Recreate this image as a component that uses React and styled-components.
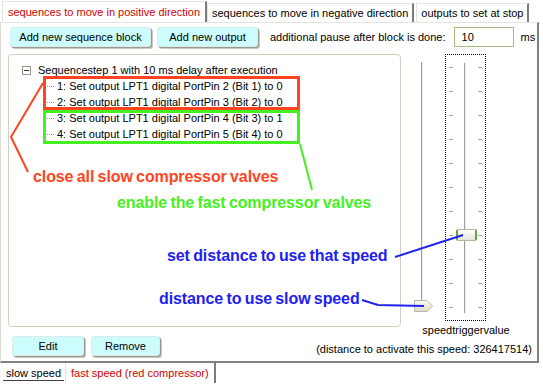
import React from 'react'
import styled, { createGlobalStyle } from 'styled-components'

const GlobalStyle = createGlobalStyle`
    body {
        margin: 0;
        background: #fff;
        font-family: "Liberation Sans", Arial, sans-serif;
        font-size: 11px;
        color: #000;
    }
`;

const Root = styled.div`
    position: relative;
    width: 543px;
    height: 386px;
    overflow: hidden;
    background: #fff;
`;

/* top tab strip */
const TabStrip = styled.div`
    display: flex;
    align-items: flex-end;
    height: 22px;
    padding-left: 2px;
`;

const Tab = styled.div`
    height: ${p => (p.active ? '21px' : '19px')};
    padding: 0 ${p => (p.active ? '5px' : '4px')};
    margin-right: ${p => (p.active ? '0' : '2px')};
    display: flex;
    align-items: center;
    white-space: nowrap;
    background: #fff;
    color: ${p => (p.active ? '#d00000' : '#000')};
    border-left: 1px solid #e4e4e4;
    border-top: 1px solid #e4e4e4;
    border-right: 2px solid #7c7c7c;
    box-sizing: border-box;
    padding-bottom: ${p => (p.active ? '1px' : '0')};
`;

/* the panel under the tabs */
const Panel = styled.div`
    width: 539px;
    height: 341px;
    box-sizing: border-box;
    border-left: 1px solid #dcdcd4;
    border-top: 1px solid #e4e4e4;
    border-right: 2px solid #808080;
    border-bottom: 2px solid #808080;
    padding: 4px 0 0 7px;
    display: flex;
    flex-direction: column;
`;

const Toolbar = styled.div`
    display: flex;
    align-items: center;
    height: 20px;
    padding-left: 2px;
`;

const Button = styled.button`
    width: ${p => p.w}px;
    height: 20px;
    margin-right: ${p => p.gap || 0}px;
    padding: 0;
    font-family: inherit;
    font-size: 11px;
    color: #000;
    background: #ccfcfc;
    border: 1px solid #d8ecec;
    border-radius: 3px;
    box-shadow: 1px 1px 0 #9a9a90, 2px 2px 0 #c8c8c0;
    box-sizing: border-box;
`;

const Label = styled.span`
    margin-left: ${p => p.ml || 0}px;
    white-space: nowrap;
`;

const NumberInput = styled.div`
    width: 60px;
    height: 20px;
    margin-left: 8px;
    box-sizing: border-box;
    border: 1px solid #a5bb82;
    padding: 0 0 0 7px;
    display: flex;
    align-items: center;
`;

const MainRow = styled.div`
    display: flex;
    margin-top: 7px;
    height: 281px;
`;

const TreeBox = styled.div`
    width: 393px;
    height: 273px;
    box-sizing: border-box;
    border: 1px solid #d0d0bf;
    border-radius: 4px;
    padding: 7px 0 0 13px;
`;

const TreeRow = styled.div`
    display: flex;
    align-items: center;
    height: 16px;
    padding-left: ${p => p.indent || 0}px;
    white-space: nowrap;
`;

const Expander = styled.span`
    width: 9px;
    height: 9px;
    box-sizing: border-box;
    border: 1px solid #9a9a8c;
    margin-right: 7px;
    display: flex;
    align-items: center;
    justify-content: center;
    background: #fff;
    &::after {
        content: '';
        width: 5px;
        height: 1px;
        background: #333;
    }
`;

const Connector = styled.span`
    width: 7px;
    border-top: 1px dotted #999;
    margin-right: 3px;
`;

const SliderColumn = styled.div`
    display: flex;
    flex-direction: column;
    align-items: center;
    margin-left: 9px;
    width: 100px;
`;

const Sliders = styled.div`
    display: flex;
    align-items: flex-start;
    width: 100%;
    padding-left: 1px;
`;

const LeftSlider = styled.div`
    position: relative;
    width: 22px;
    height: 264px;
    display: flex;
    justify-content: center;
    padding-top: 8px;
    box-sizing: border-box;
`;

const Track = styled.div`
    width: 2px;
    height: ${p => p.h}px;
    border-left: 1px solid #a09f98;
    border-right: 1px solid #f0efe6;
    box-sizing: border-box;
`;

const ArrowThumb = styled.svg`
    position: absolute;
    left: 2px;
    bottom: 5px;
`;

const FocusSlider = styled.div`
    position: relative;
    width: 41px;
    height: 267px;
    margin-left: 12px;
    box-sizing: border-box;
    border: 1px dotted #000;
    display: flex;
    justify-content: space-between;
    padding: 0 3px;
`;

const Ticks = styled.div`
    display: flex;
    flex-direction: column;
    justify-content: space-between;
    padding: 12px 0;
    height: 100%;
    box-sizing: border-box;
`;

const Tick = styled.div`
    width: 4px;
    height: 1px;
    background: #a8a8a0;
`;

const TrackWrap = styled.div`
    padding-top: 8px;
`;

const BarThumb = styled.div`
    position: absolute;
    left: 10px;
    top: 174px;
    width: 21px;
    height: 12px;
    box-sizing: border-box;
    background: linear-gradient(#ffffff, #e4e4d6);
    border: 1px solid #b4b4a4;
    border-left: 2px solid #5ca83e;
    border-right: 2px solid #5ca83e;
    border-radius: 2px;
`;

const SliderCaption = styled.div`
    margin-top: 3px;
    padding-left: 12px;
    white-space: nowrap;
`;

const Footer = styled.div`
    display: flex;
    align-items: flex-end;
    height: 21px;
    padding-left: 4px;
    padding-right: 5px;
`;

const Spacer = styled.div`
    flex: 1;
`;

const DistanceText = styled.span`
    white-space: nowrap;
    margin-bottom: 1px;
`;

/* bottom tabs */
const BottomStrip = styled.div`
    display: flex;
    align-items: flex-start;
    padding-left: 3px;
`;

const BottomTab = styled.div`
    height: ${p => (p.active ? '20px' : '18px')};
    padding: 0 ${p => (p.active ? '5px' : '3px')};
    display: flex;
    align-items: center;
    box-sizing: border-box;
    white-space: nowrap;
    color: ${p => (p.active ? '#d00000' : '#000')};
    border-bottom: ${p => (p.active ? 'none' : '1px solid #404040')};
    border-left: ${p => (p.active ? '1px solid #e4e4e4' : 'none')};
    border-right: ${p => (p.active ? '2px solid #7c7c7c' : 'none')};
    padding-top: ${p => (p.active ? '0' : '3px')};
    margin-right: 1px;
`;

/* annotation layer */
const Overlay = styled.svg`
    position: absolute;
    left: 0;
    top: 0;
    pointer-events: none;
`;

const Note = styled.span`
    position: absolute;
    left: ${p => p.x}px;
    top: ${p => p.y}px;
    font-family: "Liberation Sans", Arial, sans-serif;
    font-weight: bold;
    font-size: 16px;
    letter-spacing: -0.1px;
    word-spacing: -1px;
    white-space: nowrap;
    color: ${p => p.color};
`;

const RED = '#ff4422';
const GREEN = '#44f022';
const BLUE = '#2222ee';

const steps = [
    '1: Set output LPT1 digital PortPin 2 (Bit 1) to 0',
    '2: Set output LPT1 digital PortPin 3 (Bit 2) to 0',
    '3: Set output LPT1 digital PortPin 4 (Bit 3) to 1',
    '4: Set output LPT1 digital PortPin 5 (Bit 4) to 0',
];

export default function App() {
    return (
        <Root>
            <GlobalStyle />
            <TabStrip>
                <Tab active>sequences to move in positive direction</Tab>
                <Tab>sequences to move in negative direction</Tab>
                <Tab>outputs to set at stop</Tab>
            </TabStrip>
            <Panel>
                <Toolbar>
                    <Button w={141} gap={6}>Add new sequence block</Button>
                    <Button w={101}>Add new output</Button>
                    <Label ml={12}>additional pause after block is done:</Label>
                    <NumberInput>10</NumberInput>
                    <Label ml={7}>ms</Label>
                </Toolbar>
                <MainRow>
                    <TreeBox>
                        <TreeRow>
                            <Expander />
                            Sequencestep 1 with 10 ms delay after execution
                        </TreeRow>
                        {steps.map(s => (
                            <TreeRow key={s} indent={25}>
                                <Connector />
                                {s}
                            </TreeRow>
                        ))}
                    </TreeBox>
                    <SliderColumn>
                        <Sliders>
                            <LeftSlider>
                                <Track h={248} />
                                <ArrowThumb width="21" height="14" viewBox="0 0 21 14">
                                    <defs>
                                        <linearGradient id="ag" x1="0" y1="0" x2="0" y2="1">
                                            <stop offset="0" stopColor="#fbfbf4" />
                                            <stop offset="1" stopColor="#deddcc" />
                                        </linearGradient>
                                    </defs>
                                    <path d="M1.5 1.5 H14 L19.5 7 L14 12.5 H1.5 Z" fill="url(#ag)" stroke="#b8b7a8" />
                                </ArrowThumb>
                            </LeftSlider>
                            <FocusSlider>
                                <Ticks>
                                    {Array.from({ length: 11 }, (_, i) => <Tick key={i} />)}
                                </Ticks>
                                <TrackWrap>
                                    <Track h={250} />
                                </TrackWrap>
                                <Ticks>
                                    {Array.from({ length: 11 }, (_, i) => <Tick key={i} />)}
                                </Ticks>
                                <BarThumb />
                            </FocusSlider>
                        </Sliders>
                        <SliderCaption>speedtriggervalue</SliderCaption>
                    </SliderColumn>
                </MainRow>
                <Footer>
                    <Button w={72} gap={7}>Edit</Button>
                    <Button w={69}>Remove</Button>
                    <Spacer />
                    <DistanceText>(distance to activate this speed: 326417514)</DistanceText>
                </Footer>
            </Panel>
            <BottomStrip>
                <BottomTab>slow speed</BottomTab>
                <BottomTab active>fast speed (red compressor)</BottomTab>
            </BottomStrip>

            <Overlay width="543" height="386">
                <rect x="44.5" y="77.5" width="254" height="31" fill="none" stroke={RED} strokeWidth="3" />
                <rect x="44.5" y="111.5" width="254" height="31" fill="none" stroke={GREEN} strokeWidth="3" />
                <polyline points="43,83 11,137 28,172" fill="none" stroke={RED} strokeWidth="2" />
                <line x1="300" y1="144" x2="312" y2="190" stroke={GREEN} strokeWidth="2" />
                <line x1="395" y1="257" x2="463" y2="235" stroke={BLUE} strokeWidth="2" />
                <polyline points="362,300 378,305 424,306" fill="none" stroke={BLUE} strokeWidth="2" />
            </Overlay>
            <Note x={33} y={168} color={RED}>close all slow compressor valves</Note>
            <Note x={117} y={194} color={GREEN}>enable the fast compressor valves</Note>
            <Note x={167} y={247} color={BLUE}>set distance to use that speed</Note>
            <Note x={159} y={290} color={BLUE}>distance to use slow speed</Note>
        </Root>
    )
}
